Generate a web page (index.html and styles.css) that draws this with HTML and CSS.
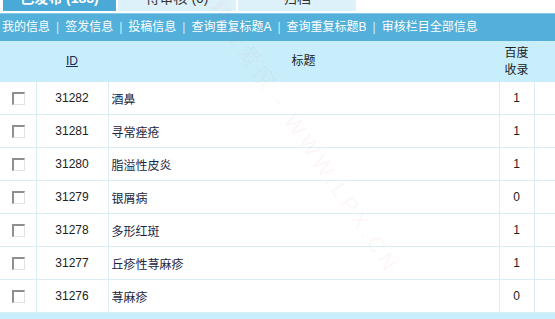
FILE: index.html
```html
<!DOCTYPE html>
<html lang="zh-CN">
<head>
    <meta charset="UTF-8">
    <title>信息管理</title>
    <link rel="stylesheet" href="styles.css">
</head>
<body>

<div class="tabs">
    <div class="tab tab-on">已发布 (188)</div>
    <div class="tab">待审核 (0)</div>
    <div class="tab">归档</div>
</div>

<div class="nav"><a href="#">我的信息</a><span class="sep">|</span><a href="#">签发信息</a><span class="sep">|</span><a href="#">投稿信息</a><span class="sep">|</span><a href="#">查询重复标题A</a><span class="sep">|</span><a href="#">查询重复标题B</a><span class="sep">|</span><a href="#">审核栏目全部信息</a></div>

<table class="list">
    <colgroup>
        <col class="c-chk"><col class="c-id"><col class="c-title"><col class="c-bd"><col class="c-more">
    </colgroup>
    <thead>
        <tr>
            <th></th>
            <th><a href="#" class="sort">ID</a></th>
            <th>标题</th>
            <th>百度<br>收录</th>
            <th></th>
        </tr>
    </thead>
    <tbody>
        <tr><td><span class="chk"></span></td><td class="num">31282</td><td class="title">酒鼻</td><td class="num">1</td><td></td></tr>
        <tr><td><span class="chk"></span></td><td class="num">31281</td><td class="title">寻常痤疮</td><td class="num">1</td><td></td></tr>
        <tr><td><span class="chk"></span></td><td class="num">31280</td><td class="title">脂溢性皮炎</td><td class="num">1</td><td></td></tr>
        <tr><td><span class="chk"></span></td><td class="num">31279</td><td class="title">银屑病</td><td class="num">0</td><td></td></tr>
        <tr><td><span class="chk"></span></td><td class="num">31278</td><td class="title">多形红斑</td><td class="num">1</td><td></td></tr>
        <tr><td><span class="chk"></span></td><td class="num">31277</td><td class="title">丘疹性荨麻疹</td><td class="num">1</td><td></td></tr>
        <tr><td><span class="chk"></span></td><td class="num">31276</td><td class="title">荨麻疹</td><td class="num">0</td><td></td></tr>
    </tbody>
</table>
<div class="foot"></div>

<div class="mark">精准爱家 - WWW.LPX.CN</div>

</body>
</html>
```

FILE: styles.css
```css
html, body {
    margin: 0;
    padding: 0;
    overflow: hidden;
}
body {
    font-family: "Liberation Sans", "Noto Sans CJK SC", sans-serif;
    font-size: 12px;
    color: #222;
    background: #fff;
    width: 620px;
}
/* tabs: page is scrolled, only their lower part shows */
.tabs {
    display: flex;
    gap: 2px;
    padding-left: 3px;
    margin-top: -15px;
    height: 26px;
}
.tab {
    width: 118px;
    line-height: 26px;
    text-align: center;
    font-size: 14px;
    background: #dcf1fa;
    color: #333;
}
.tab-on {
    width: 113px;
    background: #4aa9d6;
    color: #fff;
    font-weight: bold;
}
.nav {
    margin-top: 2px;
    height: 27px;
    line-height: 27px;
    background: #52b0db;
    border-top: 1px solid #86cbe8;
    padding-left: 2px;
    white-space: nowrap;
    color: #e8f6fc;
}
.nav a {
    color: #fff;
    text-decoration: none;
}
.nav .sep {
    margin: 0 6px;
    color: #d5edf8;
}
.list {
    border-collapse: collapse;
    table-layout: fixed;
    width: 620px;
}
.c-chk { width: 36px; }
.c-id { width: 72px; }
.c-title { width: 391px; }
.c-bd { width: 35px; }
.list th {
    background: #c8eefb;
    height: 40px;
    padding: 0;
    font-weight: normal;
    color: #222;
    line-height: 17px;
    text-align: center;
}
.list th:nth-child(4) {
    padding-top: 1px;
}
.sort {
    color: #1a2a55;
    text-decoration: underline;
}
.list td {
    height: 32px;
    padding: 0;
    border-right: 1px solid #d9edf4;
    border-bottom: 1px solid #d9edf4;
    text-align: center;
    color: #222;
}
.list td.title {
    text-align: left;
    padding-left: 3px;
    color: #1b2540;
}
.chk {
    display: inline-block;
    width: 10px;
    height: 10px;
    border-top: 2px solid #8f8f8f;
    border-left: 2px solid #8f8f8f;
    border-right: 1px solid #e2e2e2;
    border-bottom: 1px solid #e2e2e2;
    background: #fff;
    vertical-align: middle;
    margin-left: 1px;
}
.foot {
    height: 10px;
    background: #c8eefb;
}
/* site watermark over the screenshot */
.mark {
    position: absolute;
    left: 145px;
    top: 120px;
    transform: rotate(56deg);
    font-size: 22px;
    letter-spacing: 4px;
    color: rgba(225, 120, 120, 0.08);
    white-space: nowrap;
    pointer-events: none;
}
```
